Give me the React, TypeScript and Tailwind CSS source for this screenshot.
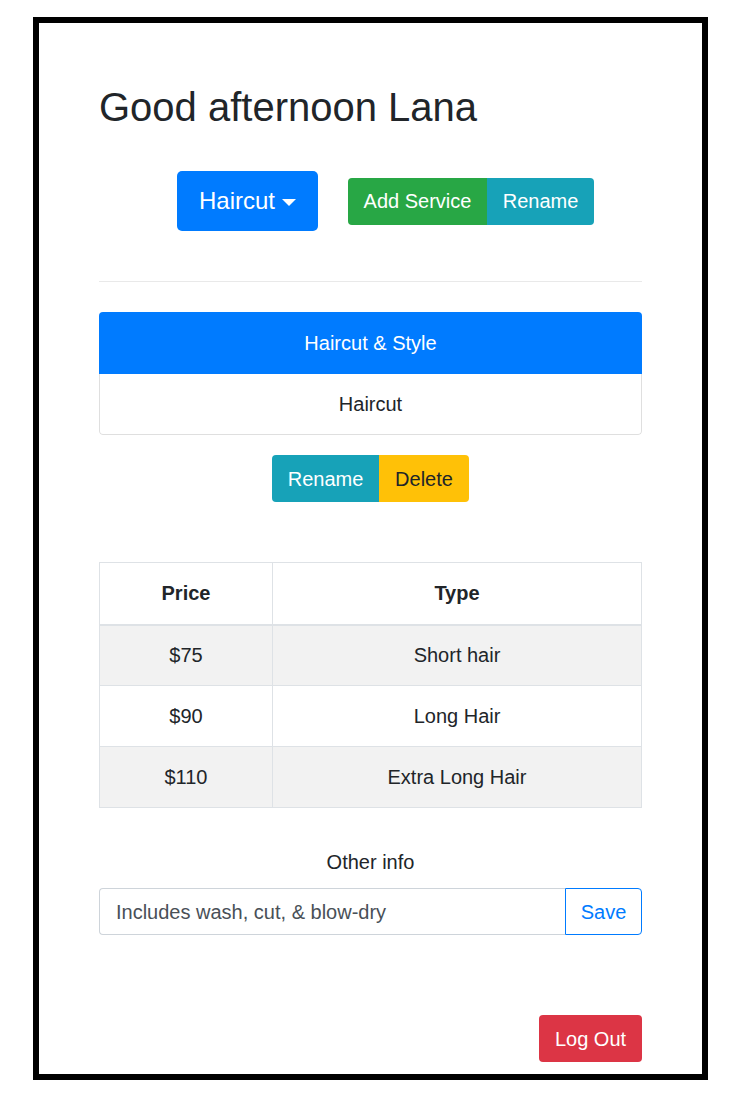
export default function App() {
  const rows = [
    { price: "$75", type: "Short hair" },
    { price: "$90", type: "Long Hair" },
    { price: "$110", type: "Extra Long Hair" },
  ];

  return (
    <div className="min-h-[1110px] bg-white pl-[33px] pt-[17px] font-['Liberation_Sans',Arial,sans-serif] text-[#212529]">
      <div className="flex h-[1063px] w-[675px] flex-col border-[6px] border-black px-[60px] pt-[60px]">
        {/* Greeting */}
        <h1 className="text-[40px] leading-[48px]">Good afternoon Lana</h1>

        {/* Service picker + actions */}
        <div className="mt-[40px] flex h-[60px] items-center pl-[78px]">
          <button className="flex h-[60px] w-[141px] items-center justify-center rounded-[5px] bg-[#007bff] text-[24px] text-white">
            Haircut
            <span className="ml-[7px] mt-[2px] h-0 w-0 border-x-[7px] border-t-[7px] border-x-transparent border-t-white" />
          </button>
          <div className="ml-[30px] flex h-[47px] overflow-hidden rounded-[4px] text-[20px] text-white">
            <button className="flex w-[139px] items-center justify-center bg-[#28a745]">Add Service</button>
            <button className="flex w-[107px] items-center justify-center bg-[#17a2b8]">Rename</button>
          </div>
        </div>

        <hr className="mt-[50px] border-t border-[#e9e9e9]" />

        {/* Sub-service list */}
        <div className="mt-[30px] overflow-hidden rounded-[4px] text-[20px]">
          <div className="flex h-[62px] items-center justify-center bg-[#007bff] text-white">Haircut &amp; Style</div>
          <div className="flex h-[61px] items-center justify-center rounded-b-[4px] border border-t-0 border-[#dfdfdf]">Haircut</div>
        </div>

        <div className="mt-[20px] flex justify-center">
          <div className="flex h-[47px] overflow-hidden rounded-[4px] text-[20px]">
            <button className="flex w-[107px] items-center justify-center bg-[#17a2b8] text-white">Rename</button>
            <button className="flex w-[90px] items-center justify-center bg-[#ffc107] text-[#212529]">Delete</button>
          </div>
        </div>

        {/* Prices */}
        <table className="mt-[60px] w-full border-collapse text-center text-[20px]">
          <thead>
            <tr>
              <th className="h-[62px] w-[173px] border border-b-2 border-[#dee2e6] font-bold">Price</th>
              <th className="h-[62px] border border-b-2 border-[#dee2e6] font-bold">Type</th>
            </tr>
          </thead>
          <tbody>
            {rows.map((r, i) => (
              <tr key={r.price} className={i % 2 === 0 ? "bg-[#f2f2f2]" : "bg-white"}>
                <td className="h-[61px] border border-[#dee2e6]">{r.price}</td>
                <td className="h-[61px] border border-[#dee2e6]">{r.type}</td>
              </tr>
            ))}
          </tbody>
        </table>

        {/* Other info */}
        <p className="mt-[39px] text-center text-[20px] leading-[30px]">Other info</p>
        <div className="mt-[11px] flex h-[47px] text-[20px]">
          <div className="flex flex-1 items-center rounded-l-[4px] border border-r-0 border-[#ced4da] px-[16px] text-[#495057]">
            Includes wash, cut, &amp; blow-dry
          </div>
          <button className="w-[77px] rounded-r-[4px] border border-[#007bff] text-[#007bff]">Save</button>
        </div>

        <div className="mt-[80px] flex justify-end">
          <button className="h-[47px] w-[103px] rounded-[4px] bg-[#dc3545] text-[20px] text-white">Log Out</button>
        </div>
      </div>
    </div>
  );
}
